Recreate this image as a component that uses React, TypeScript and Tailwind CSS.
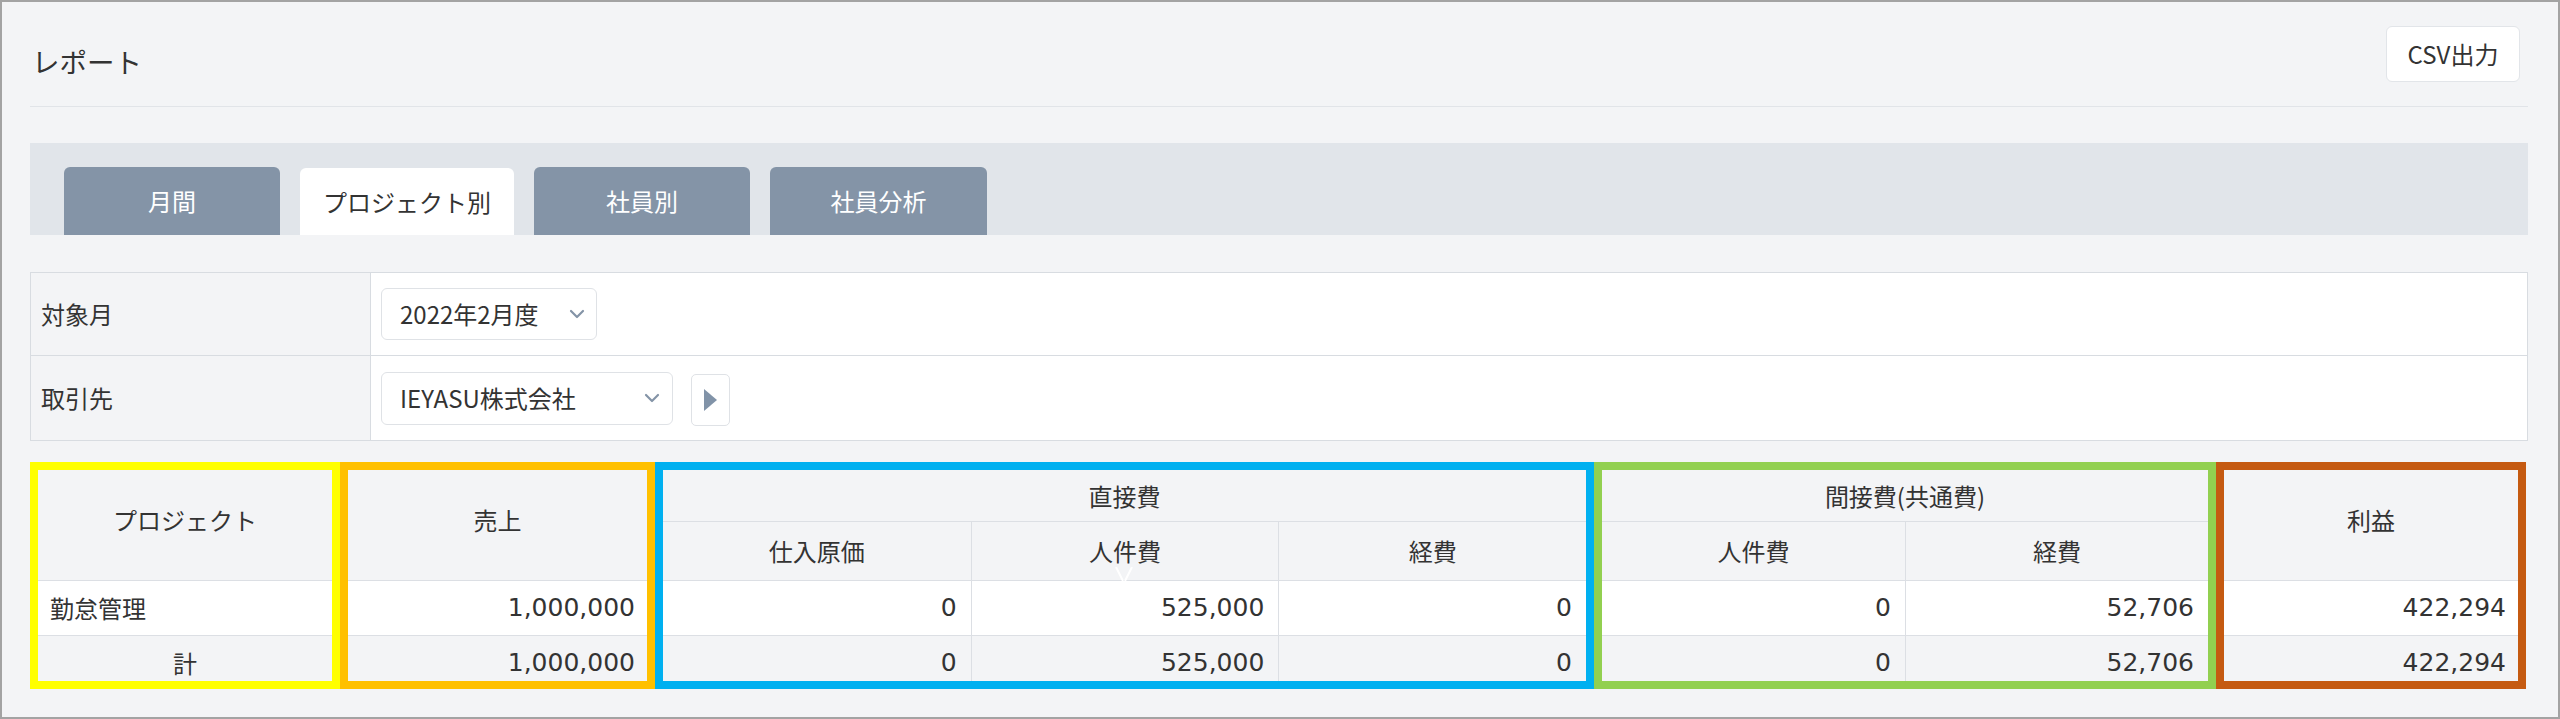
import React from "react";

const line = "border-[#dcdfe4]";
const num = "font-['DejaVu_Sans','Noto_Sans_CJK_JP',sans-serif] text-[25px]";

function Chevron() {
  return (
    <svg width="16" height="10" viewBox="0 0 16 10" fill="none" stroke="#8494a7" strokeWidth="2.2" strokeLinecap="round" strokeLinejoin="round">
      <path d="M2 2l6 6 6-6" />
    </svg>
  );
}

function PlayTriangle() {
  return (
    <svg width="13" height="22" viewBox="0 0 13 22">
      <path d="M0 0L13 11L0 22Z" fill="#8193a8" />
    </svg>
  );
}

function SingleGroup({
  frame,
  title,
  row,
  total,
  numeric,
}: {
  frame: string;
  title: string;
  row: string;
  total: string;
  numeric?: boolean;
}) {
  const rowCls = numeric ? "justify-end " + num : "justify-start";
  const totalCls = numeric ? "justify-end " + num : "justify-center";
  return (
    <div className={"flex h-full flex-col border-[8px] " + frame}>
      <div className="flex h-[110px] items-center justify-center bg-[#f3f4f6] pb-[10px]">{title}</div>
      <div className={"flex h-[55px] items-center border-t bg-white px-[12px] " + line + " " + rowCls}>{row}</div>
      <div className={"flex flex-1 items-center border-t bg-[#f3f4f6] px-[12px] pt-[8px] " + line + " " + totalCls}>{total}</div>
    </div>
  );
}

function SplitGroup({
  frame,
  title,
  cols,
  row,
  total,
  gridCols,
  children,
}: {
  frame: string;
  title: string;
  cols: string[];
  row: string[];
  total: string[];
  gridCols: string;
  children?: React.ReactNode;
}) {
  return (
    <div className={"relative flex h-full flex-col border-[8px] " + frame}>
      <div className="flex h-[110px] flex-col bg-[#f3f4f6]">
        <div className="flex h-[51px] items-center justify-center">{title}</div>
        <div className={"grid flex-1 border-t " + line + " " + gridCols}>
          {cols.map((c, i) => (
            <div key={c + i} className={"flex items-center justify-center " + (i > 0 ? "border-l " + line : "")}>
              {c}
            </div>
          ))}
        </div>
      </div>
      <div className={"grid h-[55px] border-t bg-white " + line + " " + gridCols}>
        {row.map((v, i) => (
          <div key={i} className={"flex items-center justify-end pr-[14px] " + num + " " + (i > 0 ? "border-l " + line : "")}>
            {v}
          </div>
        ))}
      </div>
      <div className={"grid flex-1 border-t bg-[#f3f4f6] " + line + " " + gridCols}>
        {total.map((v, i) => (
          <div key={i} className={"flex items-center justify-end pr-[14px] pt-[8px] " + num + " " + (i > 0 ? "border-l " + line : "")}>
            {v}
          </div>
        ))}
      </div>
      {children}
    </div>
  );
}

export default function App() {
  return (
    <div className="h-[719px] w-[2560px] overflow-hidden border-2 border-[#a3a3a3] bg-[#f3f4f6] pl-[28px] pr-[30px] text-[24px] text-[#333333] font-['Noto_Sans_CJK_JP','Noto_Sans',sans-serif]">
      {/* page header */}
      <div className="flex h-[105px] items-center justify-between border-b border-[#e1e4e8] pr-2">
        <h1 className="mt-4 pl-[2px] text-[27.5px] leading-none">レポート</h1>
        <button className="h-[56px] w-[134px] rounded-[6px] border border-[#e2e5e9] bg-white text-[24px] leading-none text-[#333333]">
          CSV出力
        </button>
      </div>

      {/* tabs */}
      <div className="mt-[36px] flex h-[92px] items-end gap-[20px] bg-[#e1e5ea] pl-[34px]">
        <div className="flex h-[68px] w-[216px] items-center justify-center rounded-t-[6px] bg-[#8494a7] text-white">月間</div>
        <div className="flex h-[67px] w-[214px] items-center justify-center rounded-t-[6px] bg-white">プロジェクト別</div>
        <div className="flex h-[68px] w-[216px] items-center justify-center rounded-t-[6px] bg-[#8494a7] text-white">社員別</div>
        <div className="flex h-[68px] w-[217px] items-center justify-center rounded-t-[6px] bg-[#8494a7] text-white">社員分析</div>
      </div>

      {/* filters */}
      <div className="mt-[37px] border border-[#d8dce1] bg-white">
        <div className="flex h-[83px] border-b border-[#d8dce1]">
          <div className="flex w-[340px] items-center border-r border-[#d8dce1] bg-[#f3f4f6] pl-[10px]">対象月</div>
          <div className="flex items-center pl-[10px]">
            <div className="flex h-[52px] w-[216px] items-center justify-between rounded-[6px] border border-[#dfe2e6] bg-white pl-[18px] pr-[11px]">
              <span>2022年2月度</span>
              <Chevron />
            </div>
          </div>
        </div>
        <div className="flex h-[84px]">
          <div className="flex w-[340px] items-center border-r border-[#d8dce1] bg-[#f3f4f6] pl-[10px]">取引先</div>
          <div className="flex items-center gap-[18px] pl-[10px]">
            <div className="flex h-[53px] w-[292px] items-center justify-between rounded-[6px] border border-[#dfe2e6] bg-white pl-[18px] pr-[12px]">
              <span>IEYASU株式会社</span>
              <Chevron />
            </div>
            <div className="mt-[4px] flex h-[52px] w-[39px] items-center justify-center rounded-[5px] border border-[#dfe2e6] bg-white">
              <PlayTriangle />
            </div>
          </div>
        </div>
      </div>

      {/* project report table */}
      <div className="mt-[21px] flex h-[227px]">
        <div className="w-[310px] shrink-0">
          <SingleGroup frame="border-[#ffff00]" title="プロジェクト" row="勤怠管理" total="計" />
        </div>
        <div className="w-[315px] shrink-0">
          <SingleGroup frame="border-[#ffc000]" title="売上" row="1,000,000" total="1,000,000" numeric />
        </div>
        <div className="w-[939px] shrink-0">
          <SplitGroup
            frame="border-[#00b0f0]"
            title="直接費"
            cols={["仕入原価", "人件費", "経費"]}
            row={["0", "525,000", "0"]}
            total={["0", "525,000", "0"]}
            gridCols="grid-cols-3"
          >
            <svg className="absolute left-[451px] top-[97px]" width="20" height="15" viewBox="0 0 20 15" fill="none" stroke="#ffffff" strokeWidth="2">
              <path d="M2 0L9 14M18 0L11 14" />
            </svg>
          </SplitGroup>
        </div>
        <div className="w-[622px] shrink-0">
          <SplitGroup
            frame="border-[#92d050]"
            title="間接費(共通費)"
            cols={["人件費", "経費"]}
            row={["0", "52,706"]}
            total={["0", "52,706"]}
            gridCols="grid-cols-2"
          />
        </div>
        <div className="w-[310px] shrink-0">
          <SingleGroup frame="border-[#c55a11]" title="利益" row="422,294" total="422,294" numeric />
        </div>
      </div>
    </div>
  );
}
